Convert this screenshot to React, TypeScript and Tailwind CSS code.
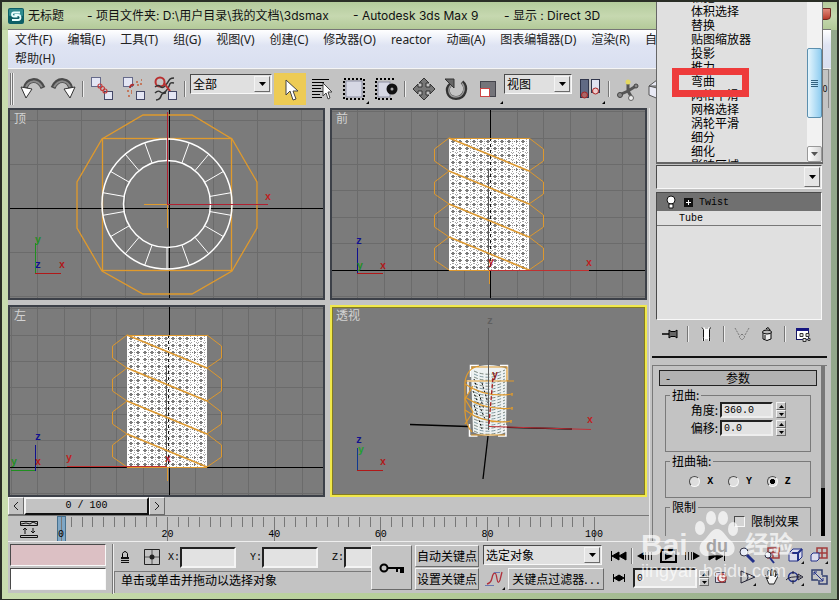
import { type ReactNode } from "react";
import clsx from "clsx";

const MENUS = [
  "文件(F)",
  "编辑(E)",
  "工具(T)",
  "组(G)",
  "视图(V)",
  "创建(C)",
  "修改器(O)",
  "reactor",
  "动画(A)",
  "图表编辑器(D)",
  "渲染(R)",
  "自定义(U)",
  "MAXScript(M)",
  "帮助(H)",
];

const MODIFIERS = [
  "松弛",
  "体积选择",
  "替换",
  "贴图缩放器",
  "投影",
  "推力",
  "弯曲",
  "网格平滑",
  "网格选择",
  "涡轮平滑",
  "细分",
  "细化",
  "影响区域",
];

const UI = "font-['Noto_Sans','Noto_Sans_CJK_SC',sans-serif]";
const TITLE = "font-['Inter','Noto_Sans_CJK_SC',sans-serif]";
const CJK = "font-['Noto_Sans_CJK_SC',sans-serif]";
const MONO = "font-['Liberation_Mono','Noto_Sans_CJK_SC',monospace]";

const raised =
  "border border-t-[#f4f4f4] border-l-[#f4f4f4] border-r-[#6b6b6b] border-b-[#6b6b6b]";
const sunken =
  "border border-t-[#4a4a4a] border-l-[#4a4a4a] border-r-[#f8f8f8] border-b-[#f8f8f8]";

function Icon({
  size = 32,
  height,
  children,
}: {
  size?: number;
  height?: number;
  children: ReactNode;
}) {
  return (
    <svg
      width={size}
      height={height ?? size}
      viewBox={`0 0 ${size} ${height ?? size}`}
      fill="none"
      aria-hidden="true"
      className="block shrink-0"
    >
      {children}
    </svg>
  );
}

function Tool({
  label,
  active,
  children,
}: {
  label: string;
  active?: boolean;
  children: ReactNode;
}) {
  return (
    <button
      type="button"
      aria-label={label}
      className={clsx("h-8 w-8 shrink-0", active && "bg-[#edcb55]")}
    >
      <Icon>{children}</Icon>
    </button>
  );
}

function Divider({ className }: { className?: string }) {
  return (
    <span
      className={clsx(
        "w-0.5 shrink-0 border-l border-[#777] bg-[#eee]",
        className ?? "mx-0.5 h-4",
      )}
    />
  );
}

function Combo({
  label,
  value,
  className,
}: {
  label: string;
  value: string;
  className: string;
}) {
  return (
    <div className={clsx("relative shrink-0", className)}>
      <select
        aria-label={label}
        className={clsx(
          "block h-full w-full appearance-none bg-[#e0e0e0] pl-0.5 text-xs leading-4 text-black",
          CJK,
          sunken,
        )}
      >
        <option>{value}</option>
      </select>
      <span
        className={clsx(
          "pointer-events-none absolute top-0.5 right-0.5 bottom-0.5 flex w-4 items-center justify-center bg-[#e4e4e4]",
          raised,
        )}
      >
        <Icon size={7} height={4}>
          <path d="M0 0h7L3.5 4z" fill="#000" />
        </Icon>
      </span>
    </div>
  );
}

function TitleBar() {
  return (
    <header
      className={clsx(
        "flex h-[27px] shrink-0 items-center text-xs text-[#111]",
        TITLE,
      )}
    >
      <Icon size={16}>
        <rect width="16" height="16" rx="2" fill="#0d5f66" />
        <rect x="1" y="1" width="14" height="7" rx="1" fill="#2f8b8f" />
        <path
          d="M12 4.500H6q-2 0-2 2t2 2h3.500M6.500 7H10q2.500 0 2.500 2.500T10 12H4"
          stroke="#e9ffff"
          strokeWidth="1.800"
        />
      </Icon>
      <span className="ml-1 w-[59px] whitespace-nowrap">无标题</span>
      <span className="w-[266px] whitespace-nowrap">
        - 项目文件夹: D:\用户目录\我的文档\3dsmax
      </span>
      <span className="w-[151px] whitespace-nowrap">- Autodesk 3ds Max 9</span>
      <span className="whitespace-nowrap">- 显示 : Direct 3D</span>
      <button
        type="button"
        aria-label="关闭"
        className="mt-[-3px] ml-auto h-3 w-10 rounded-b-sm border border-[#702a22] bg-linear-to-b from-[#e08a7c] to-[#b83a2a]"
      />
    </header>
  );
}

function MenuBar() {
  return (
    <nav
      className={clsx(
        "flex shrink-0 flex-wrap border-t border-[#777] bg-linear-to-b from-white via-[#dfe4f3] via-40% to-[#d9dff0] text-xs text-[#222]",
        UI,
      )}
    >
      {MENUS.map((m) => (
        <button key={m} type="button" className="h-[19px] pr-2 pl-[7px]">
          {m}
        </button>
      ))}
    </nav>
  );
}

function MainToolbar() {
  return (
    <div
      role="toolbar"
      aria-label="主工具栏"
      className="flex h-10 shrink-0 items-center overflow-hidden border-t border-[#f5f5f5] bg-[#c3c3c3]"
    >
      <Divider className="ml-0.5 h-8" />
      <Divider className="mr-0.5 h-8" />
      <Tool label="撤消">
        <path d="M9 16C11 6 22 4 27 15" stroke="#4a4a4a" strokeWidth="5" />
        <path d="M10 14C13 7 21 6 26 14" stroke="#8b8b8b" strokeWidth="2" />
        <path d="M5 14l11 2-6 9z" fill="#fff" stroke="#333" />
      </Tool>
      <Tool label="重做">
        <path d="M23 16C21 6 10 4 5 15" stroke="#4a4a4a" strokeWidth="5" />
        <path d="M22 14C19 7 11 6 6 14" stroke="#8b8b8b" strokeWidth="2" />
        <path d="M27 14l-11 2 6 9z" fill="#fff" stroke="#333" />
      </Tool>
      <Divider />
      <Tool label="选择并链接">
        <rect x="5.500" y="4.500" width="9" height="9" fill="#e4e6f4" stroke="#666a8a" />
        <rect x="18.500" y="18.500" width="8" height="8" fill="#e4e6f4" stroke="#444866" />
        <g stroke="#c43c3c" strokeWidth="1.200">
          <circle cx="14" cy="13" r="2" />
          <circle cx="16.500" cy="15.500" r="2" />
          <circle cx="19" cy="18" r="2" />
        </g>
      </Tool>
      <Tool label="取消链接">
        <rect x="5.500" y="4.500" width="9" height="9" fill="#e4e6f4" stroke="#666a8a" />
        <rect x="18.500" y="18.500" width="8" height="8" fill="#e4e6f4" stroke="#444866" />
        <path d="M12 15q0-4 4-3" stroke="#a33" strokeWidth="2" />
        <path
          d="M18 9h2m2 2h2m-5 1h2m2-5h1M9 18h2m2 2h1m-4 3h2m1-5h1"
          stroke="#c4603c"
          strokeWidth="1.500"
        />
      </Tool>
      <Tool label="绑定到空间扭曲">
        <circle cx="10" cy="9" r="4.500" stroke="#b93030" strokeWidth="2" />
        <path
          d="M5 14c6-5 5 4 10-1s3-8 9-8M5 20c6-6 5 4 11-2s1-9 8-8M6 27c8-1 2-7 10-7"
          stroke="#333"
          strokeWidth="1.500"
        />
        <path d="M14 10l6 8" stroke="#b93030" strokeWidth="2" />
        <rect x="18.500" y="18.500" width="8" height="8" fill="#e4e6f4" stroke="#444866" />
      </Tool>
      <Divider className="mr-1 ml-0.5 h-4" />
      <Combo label="选择过滤器" value="全部" className="mr-0.5 mb-2.5 h-5 w-[82px]" />
      <Tool label="选择对象" active>
        <path d="M12 7v15l4-4 3 9 3-1-3-8h5z" fill="#fff" stroke="#444" />
      </Tool>
      <Tool label="按名称选择">
        <path
          d="M6 6.500h17M6 9.500h12M6 12.500h13M6 15.500h9M6 18.500h11M6 21.500h8M6 24.500h10"
          stroke="#000"
        />
        <path d="M17 10v13l3-3 2 6 2-1-2-6h4z" fill="#fff" stroke="#444" />
      </Tool>
      <Tool label="矩形选择区域">
        <rect x="8" y="8" width="16" height="16" fill="#d6d8e4" stroke="#8b8ea2" />
        <rect
          x="6"
          y="6"
          width="20"
          height="20"
          stroke="#000"
          strokeWidth="2"
          strokeDasharray="2 2"
        />
        <path d="M31 28v3h-3z" fill="#000" />
      </Tool>
      <Tool label="窗口/交叉">
        <rect x="8" y="9" width="12" height="15" fill="#d6d8e4" stroke="#8b8ea2" />
        <path
          d="M24 6H6v20h18"
          stroke="#000"
          strokeWidth="2"
          strokeDasharray="2 2"
        />
        <circle cx="22" cy="16" r="5.500" fill="#111" />
        <circle cx="22" cy="16" r="1.500" fill="#aaa" />
      </Tool>
      <Divider />
      <Tool label="选择并移动">
        <path
          d="M16 5l5 5h-3v4h4v-3l5 5-5 5v-3h-4v4h3l-5 5-5-5h3v-4h-4v3l-5-5 5-5v3h4v-4h-3z"
          fill="#777"
          stroke="#333"
        />
      </Tool>
      <Tool label="选择并旋转">
        <path
          d="M11 11c-6 5-3 14 5 14 9 0 12-11 6-16"
          stroke="#333"
          strokeWidth="4"
        />
        <path
          d="M11 12c-4 5-2 12 5 12 8 0 10-9 6-14"
          stroke="#999"
          strokeWidth="1.500"
        />
        <path d="M5 6h9v9z" fill="#666" stroke="#333" />
      </Tool>
      <Tool label="选择并均匀缩放">
        <rect x="8.500" y="8.500" width="15" height="15" fill="#74747a" stroke="#44444c" />
        <rect x="8.500" y="15.500" width="9" height="8" fill="#fff" stroke="#c44" />
        <path d="M31 28v3h-3z" fill="#000" />
      </Tool>
      <Combo label="参考坐标系" value="视图" className="mr-0.5 mb-2.5 h-5 w-[68px]" />
      <Tool label="使用轴点中心">
        <rect x="6.500" y="6.500" width="8" height="18" fill="#606a84" stroke="#30364c" />
        <rect x="17.500" y="6.500" width="8" height="13" fill="#dfe2f0" stroke="#30364c" />
        <circle cx="10.500" cy="22" r="3" fill="#a66" stroke="#a22" />
        <circle cx="21.500" cy="18" r="3" fill="#ecc" stroke="#a22" />
        <path d="M31 28v3h-3z" fill="#000" />
      </Tool>
      <Divider />
      <Tool label="选择并操纵">
        <path d="M16 10v8M7 22l9-4 8-5M16 18l4 7" stroke="#555" strokeWidth="3" />
        <circle cx="16" cy="9" r="2.500" fill="#e4d860" />
        <circle cx="8" cy="22" r="2.500" fill="#888" stroke="#444" />
        <circle cx="24" cy="13" r="2" fill="#888" stroke="#444" />
        <circle cx="19" cy="25" r="2.500" fill="#eee" stroke="#666" />
      </Tool>
      <Tool label="捕捉开关">
        <path d="M5 13l8-6h14l-8 6zM5 13v9l12 5V16z" fill="#e8e9f4" stroke="#555" />
      </Tool>
      <div className="mr-0.5 ml-auto flex h-10 w-2 items-center justify-center border border-[#888] text-[8px]">
        0
      </div>
    </div>
  );
}

function Glyph({
  x,
  y,
  color,
  children,
}: {
  x: number;
  y: number;
  color: string;
  children: string;
}) {
  return (
    <text
      x={x}
      y={y}
      fill={color}
      fontSize="10"
      textAnchor="middle"
      dominantBaseline="middle"
      className="font-['Liberation_Mono',monospace] font-bold"
    >
      {children}
    </text>
  );
}

function Viewport({
  name,
  active,
  children,
}: {
  name: string;
  active?: boolean;
  children: ReactNode;
}) {
  return (
    <section
      aria-label={name}
      className={clsx(
        "relative overflow-hidden border-2 bg-[#7b7b7b]",
        active ? "border-[#f0e84c]" : "border-[#3c4048]",
      )}
    >
      <svg
        className="absolute inset-0 h-full w-full"
        shapeRendering="crispEdges"
        fill="none"
        aria-hidden="true"
      >
        {children}
      </svg>
      <h2
        className={clsx(
          "relative ml-1 w-fit text-xs leading-4 text-[#d2d2d2]",
          CJK,
        )}
      >
        {name}
      </h2>
    </section>
  );
}

function Grid({ xs, ys }: { xs: number[]; ys: number[] }) {
  return (
    <g stroke="#6b6b6b">
      {xs.map((x) => (
        <path key={x} d={`M${x}.5 0v400`} />
      ))}
      {ys.map((y) => (
        <path key={y} d={`M0 ${y}.5h800`} />
      ))}
    </g>
  );
}

// tube seen from the side, with the twist gizmo wrapped round it
function SideTube({ id }: { id: string }) {
  const turns = [0, 1, 2, 3];
  return (
    <>
      <defs>
        <pattern
          id={id}
          x="117"
          y="28"
          width="7"
          height="7"
          patternUnits="userSpaceOnUse"
        >
          <rect width="7" height="7" fill="#fff" />
          <path d="M2 3h1V2h2v1h1v1H5v1H3V4H2z" fill="#7b7b7b" />
          <path
            d="M0 1h1v1H0zM0 5h1v1H0zM1 0h1v1H1zM6 0h1v1H6zM3 6h2v1H3zM0 3h1v1H0z"
            fill="#a2a2a2"
          />
        </pattern>
      </defs>
      <rect x="117" y="28" width="80" height="132" fill={`url(#${id})`} />
      <path
        d="M117.500 28v132M131.500 28v132M183.500 28v132M196.500 28v132"
        stroke="#fff"
      />
      <path d="M158.500 28v132" stroke="#111" strokeDasharray="3 3" />
      <path d="M156.500 60v100" stroke="#555" />
      <g stroke="#dd982e" shapeRendering="auto">
        <path d="M117 28.500h80M117 160.500h80M157.500 160v14" />
        {turns.map((t) => (
          <g key={t} transform={`translate(0 ${t * 33})`}>
            <path d="M117 28l-14.500 11v12L117 61M197 28l14.500 11v12L197 61" />
            <path d="M117 28l80 33" strokeWidth="1.500" />
          </g>
        ))}
      </g>
    </>
  );
}

const SIDE_YS = [1, 28, 54, 80, 107, 133, 186];
const SPOKES = Array.from({ length: 18 }, (_, i) => (i * Math.PI) / 9);

function TopView() {
  return (
    <Viewport name="顶">
      <Grid xs={[27, 71, 115, 203, 247, 291]} ys={[10, 54, 142, 186]} />
      <path d="M159 0v400M0 98.500h800" stroke="#000" />
      <g shapeRendering="auto">
        <path
          d="M133 5h49l40 24 25 43v46l-25 43-40 23h-49l-41-23-25-43V72l25-43z"
          stroke="#e09a2c"
          strokeWidth="1.300"
        />
        <rect x="92.500" y="28.500" width="129" height="132" stroke="#e09a2c" strokeWidth="1.300" />
        <circle cx="157" cy="94" r="65" stroke="#fff" strokeWidth="1.500" />
        <circle cx="157" cy="94" r="43.500" stroke="#fff" strokeWidth="1.500" />
        {SPOKES.map((a) => (
          <path
            key={a}
            d={`M${157 + 43.5 * Math.sin(a)} ${94 + 43.5 * Math.cos(a)}L${157 + 65 * Math.sin(a)} ${94 + 65 * Math.cos(a)}`}
            stroke="#fff"
          />
        ))}
      </g>
      <path d="M134 94.500h23M157.500 94v24" stroke="#e09a2c" />
      <path d="M157.500 2v92M157 94.500h101" stroke="#b02030" />
      <Glyph x={258} y={87} color="#c02020">x</Glyph>
      <path d="M25.500 163v-30" stroke="#1f8f1f" />
      <path d="M25 163.500h26" stroke="#b01818" />
      <Glyph x={28} y={130} color="#1f8f1f">y</Glyph>
      <Glyph x={28} y={155} color="#101090">z</Glyph>
      <Glyph x={52} y={155} color="#b01818">x</Glyph>
    </Viewport>
  );
}

function FrontView() {
  return (
    <Viewport name="前">
      <Grid
        xs={[25, 52, 79, 105, 132, 185, 211, 238, 264, 290]}
        ys={SIDE_YS}
      />
      <path d="M158.500 0v400M0 160.500h800" stroke="#000" />
      <SideTube id="mesh-front" />
      <path d="M157 160.500h100" stroke="#c03030" />
      <Glyph x={257} y={153} color="#c02020">x</Glyph>
      <Glyph x={159} y={152} color="#c02020">y</Glyph>
      <path d="M25.500 164v-26" stroke="#101090" />
      <path d="M25 163.500h26" stroke="#b01818" />
      <Glyph x={27} y={131} color="#101090">z</Glyph>
      <Glyph x={28} y={156} color="#1f8f1f">y</Glyph>
      <Glyph x={51} y={156} color="#b01818">x</Glyph>
    </Viewport>
  );
}

function LeftView() {
  return (
    <Viewport name="左">
      <Grid
        xs={[1, 27, 54, 80, 106, 133, 185, 212, 238, 265, 292]}
        ys={SIDE_YS}
      />
      <path d="M159.500 0v400M0 160.500h800" stroke="#000" />
      <SideTube id="mesh-left" />
      <path d="M57 159.500h100" stroke="#c03030" />
      <Glyph x={59} y={151} color="#c02020">y</Glyph>
      <Glyph x={158} y={152} color="#c02020">x</Glyph>
      <path d="M25.500 164v-26" stroke="#101090" />
      <path d="M1 163.500h24" stroke="#1f8f1f" />
      <Glyph x={28} y={130} color="#101090">z</Glyph>
      <Glyph x={4} y={155} color="#1f8f1f">y</Glyph>
      <Glyph x={28} y={155} color="#b01818">x</Glyph>
    </Viewport>
  );
}

function PerspectiveView() {
  const rows = Array.from({ length: 21 }, (_, i) => 64 + i * 3);
  return (
    <Viewport name="透视" active>
      <rect width="100%" height="100%" stroke="#857c20" strokeWidth="2" />
      <g shapeRendering="auto">
        <path d="M78 117.500l58 2M160 120l80 2" stroke="#000" strokeWidth="1.300" />
        <path d="M156 129l-5 43" stroke="#000" strokeWidth="1.300" />
        <path d="M139 62q18-8 36 0l-1 63q-16 8-33 0z" fill="#eef2f2" />
        {rows.map((y) => (
          <path
            key={y}
            d={`M142 ${y}q14 7 31-1`}
            stroke={y % 2 ? "#5f7f88" : "#5a6a60"}
            strokeWidth=".8"
            strokeDasharray="4 2"
          />
        ))}
        <path d="M142 72l10 30M141 84l12 28M142 98l8 24M150 76l6 20" stroke="#111" strokeDasharray="2 2" />
        <path
          d="M147 58.500h-8.500V70M168 58.500h7.500V73M137.500 117v12h8M166 129h8V118M136 74h10M136 73v14"
          stroke="#fff"
          strokeWidth="1.500"
        />
        <g stroke="#e09a2c" strokeWidth="1.200">
          <path d="M147 59q-12 2-14 16v30q1 14 7 20M139 60h36v14M139 128h34" />
          <path d="M133 74h49M133 77q20 14 48 10M133 90q20 14 48 11M133 103q20 15 47 11M180 86v3M180 100v3M179 113v3M133 117l8-12-8-13 8-13" />
        </g>
        <path d="M156.500 21v102" stroke="#5c5c5c" />
        <path d="M157 117l4-47" stroke="#a82020" strokeDasharray="4 2" strokeWidth="1.300" />
        <path d="M157 119.500l102 3" stroke="#c03038" />
      </g>
      <Glyph x={158} y={14} color="#606060">z</Glyph>
      <Glyph x={163} y={68} color="#8a2020">y</Glyph>
      <Glyph x={258} y={113} color="#c02020">x</Glyph>
      <path d="M25.500 163v-22" stroke="#103890" />
      <path d="M25 163.500h26" stroke="#b01818" />
      <Glyph x={27} y={133} color="#101090">z</Glyph>
      <Glyph x={29} y={143} color="#1f9f2f">y</Glyph>
      <Glyph x={51} y={155} color="#b01818">x</Glyph>
    </Viewport>
  );
}

function TimeSlider() {
  return (
    <div className={clsx("flex h-[18px] shrink-0 text-[10px]", MONO)}>
      <button type="button" aria-label="上一帧" className={clsx("flex w-4 items-center justify-center", raised)}>
        <Icon size={6} height={8}>
          <path d="M5 0L1 4l4 4" stroke="#222" />
        </Icon>
      </button>
      <button
        type="button"
        className="w-[125px] border-2 border-t-[#f4f4f4] border-r-[#111] border-b-[#111] border-l-[#f4f4f4] leading-3"
      >
        0 / 100
      </button>
      <button type="button" aria-label="下一帧" className={clsx("flex w-4 items-center justify-center", raised)}>
        <Icon size={6} height={8}>
          <path d="M1 0l4 4-4 4" stroke="#222" />
        </Icon>
      </button>
    </div>
  );
}

function TrackBar() {
  const ticks = Array.from({ length: 51 }, (_, i) => i * 2);
  return (
    <div className="flex h-[26px] shrink-0 items-stretch border-t border-[#777] pr-[55px]">
      <button type="button" aria-label="打开迷你曲线编辑器" className="flex w-[53px] items-center pl-3">
        <Icon size={18}>
          <path
            d="M.5 1.500h17v4H.5zM1 4l5-1 4 1 3-2 4 2M.5 15.500h17v2H.5zM5 14V8M3 10l2-2 2 2M13 8v5M11 11l2 2 2-2"
            stroke="#111"
          />
        </Icon>
      </button>
      <svg className="h-[26px] min-w-0 flex-1 overflow-visible" shapeRendering="crispEdges">
        <rect x="-4" y="0" width="8" height="25" fill="#7fa6c4" stroke="#46708e" />
        {ticks.map((t) => (
          <line
            key={t}
            x1={`${t}%`}
            x2={`${t}%`}
            y1="1"
            y2={t % 20 ? 11 : 25}
            stroke="#777"
          />
        ))}
        {[0, 20, 40, 60, 80, 100].map((t) => (
          <text
            key={t}
            x={`${t}%`}
            y="21"
            fontSize="10"
            textAnchor="middle"
            className="font-['Liberation_Mono',monospace]"
          >
            {t}
          </text>
        ))}
      </svg>
    </div>
  );
}

function Spinner() {
  return (
    <span className="flex w-[10px] shrink-0 flex-col">
      {["M0 3h5L2.500 0z", "M0 0h5L2.500 3z"].map((d, i) => (
        <button
          key={d}
          type="button"
          aria-label={i ? "减小" : "增大"}
          className={clsx("flex h-2 items-center justify-center bg-[#c8c8c8]", raised)}
        >
          <Icon size={5} height={3}>
            <path d={d} fill="#000" />
          </Icon>
        </button>
      ))}
    </span>
  );
}

function NumberRow({ label, value }: { label: string; value: string }) {
  return (
    <div className="flex h-[18px] items-center">
      <label className="flex flex-1 items-center justify-end gap-0.5">
        {label}
        <input
          type="text"
          defaultValue={value}
          className={clsx(
            "h-4 w-[53px] border-2 border-t-[#222] border-r-[#eee] border-b-[#eee] border-l-[#222] bg-[#e2e2e2] px-0.5 text-[10px]",
            MONO,
          )}
        />
      </label>
      <span className="mr-6 ml-[3px]">
        <Spinner />
      </span>
    </div>
  );
}

function Group({
  title,
  className,
  children,
}: {
  title: string;
  className?: string;
  children: ReactNode;
}) {
  return (
    <fieldset className={clsx("border border-[#7a7a7a]", className)}>
      <legend className="ml-1 px-0.5 leading-3">{title}</legend>
      {children}
    </fieldset>
  );
}

function CommandPanel() {
  return (
    <aside className="flex w-[182px] shrink-0 flex-col border-l border-[#e6e6e6] pt-[57px]">
      <Combo label="修改器列表" value="" className="mr-[9px] ml-1.5 h-6" />
      <ul
        className={clsx(
          "mt-[3px] mr-[9px] ml-1.5 h-32 shrink-0 bg-[#e0e0e0] text-[10px]",
          MONO,
          sunken,
        )}
      >
        <li className="flex h-[18px] items-center bg-[#707070] pl-2 text-black">
          <Icon size={12} height={14}>
            <circle cx="6" cy="5" r="4" fill="#fff" stroke="#111" />
            <path d="M4 9h4v4H4z" fill="#fff" stroke="#111" />
          </Icon>
          <span className="ml-[7px]">
            <Icon size={9}>
              <rect width="9" height="9" fill="#111" />
              <path d="M2 4.500h5M4.500 2v5" stroke="#fff" />
            </Icon>
          </span>
          <span className="ml-1.5">Twist</span>
        </li>
        <li className="h-[15px] border-b border-[#777] pl-[22px] leading-[15px]">
          Tube
        </li>
      </ul>
      <div className="mr-2 flex h-7 shrink-0 items-center justify-between pr-3 pl-3">
        <button type="button" aria-label="锁定堆栈">
          <Icon size={16}>
            <path d="M0 8h7" stroke="#000" strokeWidth="1.500" />
            <path d="M7 4v8l2-1.500h4L15 12V4l-2 1.500H9z" fill="#666" stroke="#000" />
          </Icon>
        </button>
        <Divider className="h-4" />
        <button type="button" aria-label="显示最终结果">
          <Icon size={16}>
            <path d="M4 1.500h3v1.500h3V1.500h2.500l-1 2v8l1 3H10V13H7v1.500H4l1-3v-8z" fill="#fff" />
            <path d="M4 1.500l1.500 2v8V15M12.500 1.500l-1 2v8V15" stroke="#111" />
          </Icon>
        </button>
        <Divider className="h-4" />
        <button type="button" aria-label="使唯一" disabled>
          <Icon size={16}>
            <path d="M1 2l4 7M15 2l-4 7M8 8l3 3-3 3-3-3z" stroke="#777" strokeDasharray="2 1" />
          </Icon>
        </button>
        <button type="button" aria-label="移除修改器">
          <Icon size={16}>
            <path d="M4 6h8v7q-4 3-8 0z" fill="#eee" stroke="#000" />
            <ellipse cx="8" cy="6" rx="4.500" ry="2" fill="#bbb" stroke="#000" />
            <path d="M7 3q2-3 4 1M6 9v4" stroke="#000" />
          </Icon>
        </button>
        <Divider className="h-4" />
        <button type="button" aria-label="配置修改器集">
          <Icon size={16}>
            <rect x="1.500" y="2.500" width="12" height="11" fill="#fff" stroke="#161660" />
            <path d="M1 3.500h13" stroke="#161680" strokeWidth="3" />
            <path d="M5 7.500h3v3H5zM11 7.500h3v3h-3zM8 12.500h3v3H8zM13 12.500h2v2h-2z" fill="#ddd" stroke="#333" />
          </Icon>
        </button>
      </div>
      <div className="mt-2 mr-1 ml-0.5 h-0.5 shrink-0 bg-[#111]" />
      <div className="mt-[7px] mr-1 ml-0.5 flex min-h-0 flex-1 border-t border-l border-[#7a7a7a]">
        <div
          className={clsx(
            "h-[170px] min-w-0 flex-1 overflow-hidden pt-1 pr-1 pl-1.5 text-xs text-black",
            CJK,
          )}
        >
          <button
            type="button"
            className="relative block h-4 w-full border border-[#222] bg-[#b2b2b2] leading-[14px]"
          >
            <span className="absolute left-1.5">-</span>
            参数
          </button>
          <div className="px-1.5">
            <Group title="扭曲:" className="mt-[3px] h-[63px]">
              <NumberRow label="角度:" value="360.0" />
              <NumberRow label="偏移:" value="0.0" />
            </Group>
            <Group title="扭曲轴:" className="mt-[3px] h-[43px]">
              <div className={clsx("flex justify-around pt-2 pr-3 pl-4 text-[10px] font-bold", MONO)}>
                {["X", "Y", "Z"].map((axis) => (
                  <label key={axis} className="flex items-center gap-[7px]">
                    <input
                      type="radio"
                      name="axis"
                      defaultChecked={axis === "Z"}
                      className={clsx(
                        "h-[11px] w-[11px] appearance-none rounded-full bg-[#dedede] checked:bg-[radial-gradient(#000_40%,#dedede_45%)]",
                        sunken,
                      )}
                    />
                    {axis}
                  </label>
                ))}
              </div>
            </Group>
            <Group title="限制" className="mt-[3px] h-20">
              <label className="mr-[11px] flex items-center justify-end gap-1.5">
                <input
                  type="checkbox"
                  className={clsx("h-[11px] w-[11px] appearance-none bg-[#d4d4d4]", sunken)}
                />
                限制效果
              </label>
            </Group>
          </div>
        </div>
        <div className="mr-0.5 h-[170px] w-1 shrink-0 bg-[#777] pt-[122px]">
          <div className="h-12 bg-black" />
        </div>
      </div>
    </aside>
  );
}

function Coord({ axis, className }: { axis: string; className: string }) {
  return (
    <label className={clsx("flex shrink-0 items-center text-[10px]", MONO)}>
      {axis}:
      <input
        type="text"
        className={clsx(
          "h-[21px] border-2 border-t-[#222] border-r-[#f4f4f4] border-b-[#f4f4f4] border-l-[#222] bg-[#e2e2e2]",
          className,
        )}
      />
    </label>
  );
}

function PlayButton({ label, children }: { label: string; children: ReactNode }) {
  return (
    <button type="button" aria-label={label} className="flex w-6 shrink-0 justify-center">
      <Icon size={18} height={14}>{children}</Icon>
    </button>
  );
}

function NavButton({ label, children }: { label: string; children: ReactNode }) {
  return (
    <button type="button" aria-label={label} className="flex w-6 shrink-0 justify-center">
      <Icon size={18}>{children}</Icon>
    </button>
  );
}

function StatusBar() {
  const push = clsx("h-[22px] text-xs leading-4 whitespace-nowrap", CJK, raised);
  return (
    <footer className="flex h-[52px] shrink-0 border-t border-[#eee] bg-[#c3c3c3] pt-0.5">
      <div className="flex w-[98px] shrink-0 flex-col gap-0.5 pl-0.5">
        <input aria-label="宏录制器" className={clsx("h-[22px] w-full bg-[#dcc0c4]", sunken)} />
        <input aria-label="侦听器" className={clsx("h-[22px] w-full bg-white", sunken)} />
      </div>
      <Divider className="ml-1.5 h-[50px]" />
      <div className="flex min-w-0 flex-1 flex-col overflow-hidden">
        <div className="flex h-[26px] items-center pl-1.5">
          <button type="button" aria-label="选择锁定切换">
            <Icon size={10} height={14}>
              <path d="M2.500 7V3.500q2.500-4 5 0V7" stroke="#000" />
              <path d="M1 7h8v6H1z" fill="#111" />
              <path d="M1 9.500h8M1 11.500h8" stroke="#bbb" />
            </Icon>
          </button>
          <button type="button" aria-label="绝对模式变换输入" className="mr-2 ml-3.5">
            <Icon size={16}>
              <path d="M.5.5h15v15H.5z" stroke="#222" />
              <path d="M1 8h14M8 1v14" stroke="#555" />
              <circle cx="8" cy="8" r="2.500" fill="#222" />
            </Icon>
          </button>
          <Coord axis="X" className="mr-3.5 w-14" />
          <Coord axis="Y" className="mr-3.5 w-14" />
          <Coord axis="Z" className="w-14" />
        </div>
        <p
          className={clsx(
            "mt-px h-[22px] border-t border-l border-[#7a7a7a] pl-1.5 text-xs leading-4 whitespace-nowrap",
            CJK,
          )}
        >
          单击或单击并拖动以选择对象
        </p>
      </div>
      <button
        type="button"
        aria-label="设置关键点"
        className={clsx("mt-px flex h-[45px] w-[41px] shrink-0 items-center justify-center", raised)}
      >
        <Icon size={26} height={12}>
          <circle cx="5" cy="6" r="3.500" stroke="#000" strokeWidth="2" />
          <path d="M8 6h17M22 6v5M18 6v4M24 6v5" stroke="#000" strokeWidth="2" />
        </Icon>
      </button>
      <div className="mt-px ml-[3px] flex w-16 shrink-0 flex-col gap-px">
        <button type="button" className={push}>自动关键点</button>
        <button type="button" className={push}>设置关键点</button>
      </div>
      <div className="mt-px ml-1 flex w-[121px] shrink-0 flex-col gap-[3px]">
        <Combo label="选择集" value="选定对象" className="h-5 w-[119px]" />
        <div className="flex">
          <button type="button" aria-label="新建关键点切线" className="w-[25px]">
            <Icon size={22}>
              <path d="M4 16q4-1 5-6t3-5q1 0 2 6t3 1l2-8" stroke="#b0303c" strokeWidth="1.300" />
              <path d="M2 17.500h9M11 4.500h6" stroke="#6a78b0" />
              <path d="M22 19v3h-3z" fill="#111" />
            </Icon>
          </button>
          <button type="button" className={clsx(push, "flex-1")}>关键点过滤器. . .</button>
        </div>
      </div>
      <div className="ml-[3px] flex w-[127px] shrink-0 flex-col">
        <div className="flex h-[23px] items-center">
          <PlayButton label="转至开头">
            <path d="M1.500 2v10M2 7l7-4v8zM9 7l7-4v8z" fill="#000" stroke="#000" />
          </PlayButton>
          <Divider className="h-4" />
          <PlayButton label="上一帧">
            <path d="M1 7l7-4v8z" fill="#000" />
            <path d="M9.500 3v8M12.500 3v8M15.500 3v8" stroke="#222" />
          </PlayButton>
          <PlayButton label="播放动画">
            <path d="M1 1h15v12H1z" stroke="#000" strokeWidth="2" />
            <path d="M5 3l8 4-8 4z" fill="#000" />
          </PlayButton>
          <PlayButton label="下一帧">
            <path d="M16 7L9 3v8z" fill="#000" />
            <path d="M1.500 3v8M4.500 3v8M7.500 3v8" stroke="#222" />
          </PlayButton>
          <PlayButton label="转至结尾">
            <path d="M1 3l7 4-7 4zM8 3l7 4-7 4zM16.500 2v10" fill="#000" stroke="#000" />
          </PlayButton>
        </div>
        <div className="flex h-[22px] items-center">
          <PlayButton label="关键点模式切换">
            <path d="M3.500 3v8M14.500 3v8M4 7l5-3v6zM14 7L9 4v6z" fill="#000" stroke="#000" />
          </PlayButton>
          <input
            aria-label="当前帧"
            defaultValue="0"
            className={clsx(
              "mx-0.5 h-5 w-16 border-2 border-t-[#222] border-r-[#f4f4f4] border-b-[#f4f4f4] border-l-[#222] bg-[#e2e2e2] px-0.5 text-[10px]",
              MONO,
            )}
          />
          <Spinner />
          <PlayButton label="时间配置">
            <path d="M3.500 1.500h10v10h-10z" fill="#dde" stroke="#445" />
            <circle cx="10" cy="7" r="4" fill="#eee" stroke="#a33" strokeWidth="1.500" />
            <path d="M10 4v3h3" stroke="#a33" />
          </PlayButton>
        </div>
      </div>
      <div className="ml-px grid w-24 shrink-0 grid-cols-4 content-start gap-y-1 pt-0.5">
        <NavButton label="缩放">
          <circle cx="6" cy="6" r="4" fill="#e8ecf8" stroke="#334" />
          <path d="M9 9l7 7" stroke="#223088" strokeWidth="3" />
        </NavButton>
        <NavButton label="缩放所有视图">
          <path d="M6 2h11v10H6zM6 7h11M11 2v10" stroke="#a33c3c" strokeWidth="1.500" />
          <circle cx="6" cy="9" r="3" fill="#e8ecf8" stroke="#334" />
          <path d="M8 12l4 5" stroke="#223088" strokeWidth="2" />
        </NavButton>
        <NavButton label="最大化显示">
          <path d="M3 7l4-4h9v8l-4 4H3z" fill="#dde" stroke="#223088" />
          <path d="M3 7h9v8M12 7l4-4" stroke="#223088" strokeWidth="2" />
          <path d="M18 15v3h-3z" fill="#111" />
        </NavButton>
        <NavButton label="所有视图最大化显示">
          <path d="M7 2h10v10H7zM7 7h10M12 2v10" stroke="#a33c3c" strokeWidth="1.500" />
          <path d="M1 9l2-2h6v6l-2 2H1z" fill="#dde" stroke="#223088" />
          <path d="M18 15v3h-3z" fill="#111" />
        </NavButton>
        <NavButton label="视野">
          <path d="M3 3v12M3 3l14 6-14 6M8 5q4 4 0 8" stroke="#223" />
          <path d="M18 15v3h-3z" fill="#111" />
        </NavButton>
        <NavButton label="平移视图">
          <path
            d="M3 7l3 4V3q1-2 2 0l1 5V2q1-1 2 0v6l1-5q2-1 2 1l-1 5 2-3q2 0 1 2l-4 8H7z"
            fill="#f4f4f4"
            stroke="#222"
          />
        </NavButton>
        <NavButton label="弧形旋转">
          <circle cx="7" cy="9" r="4.500" stroke="#223088" strokeWidth="1.500" />
          <path d="M0 12q3-4 15-3M7 3v3M7 12v4M12 6l5 3-5 3z" stroke="#223" />
          <path d="M18 15v3h-3z" fill="#111" />
        </NavButton>
        <NavButton label="最大化视口切换">
          <path d="M8 12H2V2h10v5" stroke="#334070" strokeWidth="1.500" />
          <path d="M12 8h5v8H9v-4" stroke="#334070" strokeWidth="1.500" />
          <path d="M4 4l9 9M4 7V4h3M13 10v3h-3" stroke="#223088" />
        </NavButton>
      </div>
    </footer>
  );
}

function ModifierList() {
  return (
    <div className="absolute top-0 right-3.5 flex h-[164px] w-[167px] overflow-hidden border-b-2 border-l border-[#666] bg-[#e0e0e0]">
      <ul className={clsx("-mt-[10px] flex-1 pl-[34px] text-xs leading-[14px] text-black", CJK)}>
        {MODIFIERS.map((m) => (
          <li key={m}>{m}</li>
        ))}
      </ul>
      <div className="flex w-4 flex-col border-r border-[#777] bg-[#f2f2f2] pt-12">
        <div className="flex h-[70px] flex-col items-center justify-center gap-px rounded-xs border border-[#5c8fae] bg-linear-to-r from-[#e4f5fd] to-[#8fcdf0]">
          <span className="h-px w-[7px] bg-[#33627e]" />
          <span className="h-px w-[7px] bg-[#33627e]" />
          <span className="h-px w-[7px] bg-[#33627e]" />
          <span className="h-px w-[7px] bg-[#33627e]" />
        </div>
        <button
          type="button"
          aria-label="向下滚动"
          className="mt-auto flex h-4 items-center justify-center rounded-xs border border-[#999] bg-linear-to-r from-white to-[#d4d4d4]"
        >
          <Icon size={7} height={4}>
            <path d="M0 0h7L3.500 4z" fill="#555" />
          </Icon>
        </button>
      </div>
      <div className="absolute top-[68px] left-[15px] h-[29px] w-[77px] border-[7px] border-[#ee3b3b]" />
    </div>
  );
}

function Watermark() {
  return (
    <div className="pointer-events-none absolute right-11 bottom-4 w-[152px] font-['Liberation_Sans','Noto_Sans_CJK_SC',sans-serif] text-white/70">
      <div className="flex items-end justify-between">
        <span className="text-3xl leading-6 font-bold">Bai</span>
        <svg width="46" height="46" viewBox="0 0 46 46" className="-mx-1">
          <g fill="#fff" fillOpacity=".7">
            <ellipse cx="7" cy="17" rx="5" ry="7" />
            <ellipse cx="18" cy="7" rx="5" ry="7" />
            <ellipse cx="30" cy="7" rx="5" ry="7" />
            <ellipse cx="40" cy="18" rx="5" ry="7" />
            <path d="M24 18c-6 0-8 7-13 11-8 6-4 17 4 16 6-1 12-1 18 0 9 1 12-10 4-16-5-4-7-11-13-11z" />
          </g>
          <text x="24" y="41" textAnchor="middle" fontSize="18" fill="#a4a4a4" className="font-bold">
            du
          </text>
        </svg>
        <span className="text-2xl leading-6 font-bold">经验</span>
      </div>
      <div className="mt-0.5 text-lg leading-6 whitespace-nowrap">jingyan.baidu.com</div>
    </div>
  );
}

export default function App() {
  return (
    <div className="relative flex h-screen flex-col overflow-hidden border-x-2 border-t-2 border-b border-[#2a2e26] bg-linear-to-r from-[#c8dcae] via-[#b5cd98] to-[#93a88c] px-1.5 pb-1.5 text-black">
      <div className="absolute inset-x-0 top-0 h-7 bg-linear-to-b from-[#b4cb9c] via-[#c6d8b0] to-[#b2c997]" />
      <div className="relative flex min-h-0 flex-1 flex-col">
        <TitleBar />
        <MenuBar />
        <MainToolbar />
        <div className="flex min-h-0 flex-1 bg-[#c3c3c3]">
          <main className="flex min-w-0 flex-1 flex-col">
            <div className="grid min-h-0 flex-1 grid-cols-2 grid-rows-2 gap-[5px] pr-0.5">
              <TopView />
              <FrontView />
              <LeftView />
              <PerspectiveView />
            </div>
            <TimeSlider />
            <TrackBar />
          </main>
          <CommandPanel />
        </div>
        <StatusBar />
      </div>
      <div className="absolute -top-0.5 right-0">
        <div className="relative">
          <ModifierList />
        </div>
      </div>
      <Watermark />
    </div>
  );
}
